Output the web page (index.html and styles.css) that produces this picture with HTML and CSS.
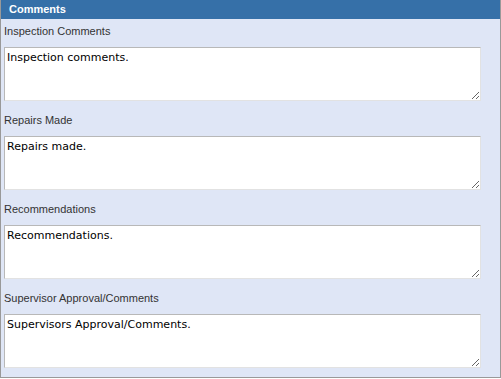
FILE: index.html
```html
<!DOCTYPE html>
<html lang="en">

<head>
  <meta charset="UTF-8">
  <meta name="viewport" content="width=device-width, initial-scale=1.0">
  <title>Comments</title>
  <link rel="stylesheet" href="styles.css">
</head>

<body>
  <section class="panel">
    <h2 class="panel-title">Comments</h2>
    <div class="panel-body">
      <div class="field">
        <label for="inspection">Inspection Comments</label>
        <textarea id="inspection">Inspection comments.</textarea>
      </div>
      <div class="field">
        <label for="repairs">Repairs Made</label>
        <textarea id="repairs">Repairs made.</textarea>
      </div>
      <div class="field">
        <label for="recommend">Recommendations</label>
        <textarea id="recommend">Recommendations.</textarea>
      </div>
      <div class="field">
        <label for="supervisor">Supervisor Approval/Comments</label>
        <textarea id="supervisor">Supervisors Approval/Comments.</textarea>
      </div>
    </div>
  </section>
</body>

</html>
```

FILE: styles.css
```css
body {
  margin: 0;
  font-family: "Liberation Sans", Arial, sans-serif;
}

.panel {
  width: 499px;
  height: 377px;
  border: 1px solid #999;
  border-top: 0;
  border-right-width: 2px;
  background: #dfe6f6;
  box-sizing: content-box;
}

.panel-title {
  margin: 0;
  height: 19px;
  padding-left: 8px;
  background: #3670a8;
  color: #fff;
  font-size: 11px;
  font-weight: bold;
  line-height: 19px;
}

.panel-body {
  padding: 0 0 9px 3px;
}

.field label {
  display: block;
  margin: 12px 0 9px;
  font-size: 11px;
  line-height: 14px;
  color: #333;
}

.field:first-child label {
  margin-top: 5px;
}

.field textarea {
  display: block;
  box-sizing: border-box;
  width: 477px;
  height: 54px;
  margin: 0;
  padding: 3px 2px;
  border: 1px solid;
  border-color: #b8b8b8 #e2e2e2 #e2e2e2 #b8b8b8;
  background: #fff;
  font-family: "DejaVu Sans", Verdana, sans-serif;
  font-size: 11px;
  color: #000;
}
```
